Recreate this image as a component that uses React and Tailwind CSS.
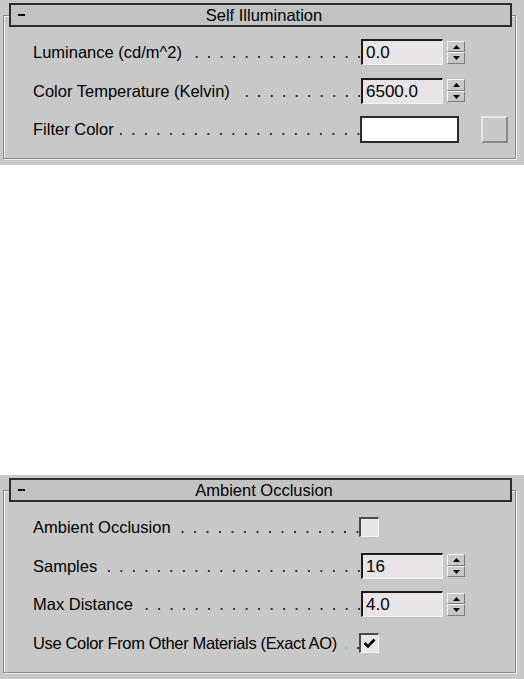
import React from 'react';

// 3ds Max style rollouts: Self Illumination / Ambient Occlusion

const Leader = ({ gap = 6 }) => (
  <span
    className="flex-1 min-w-[6px] h-[2px] mb-[4px] bg-[linear-gradient(to_right,transparent_9.5px,#303030_9.5px,#303030_11.5px,transparent_11.5px)] bg-[length:12.5px_2px] bg-repeat-x bg-right"
    style={{ marginLeft: gap }}
  />
);

const Label = ({ text, width, tight }) => (
  <div className="flex items-end h-[20px] leading-[20px] shrink-0" style={{ width }}>
    <span className={tight ? 'shrink-0 whitespace-nowrap tracking-[-0.35px]' : 'shrink-0 whitespace-nowrap'}>{text}</span>
    <Leader gap={tight ? 9 : 6} />
  </div>
);

const Arrow = ({ up }) => (
  <svg width="7" height="4" viewBox="0 0 7 4">
    <polygon points={up ? '3.5,0 7,4 0,4' : '0,0 7,0 3.5,4'} fill="#000" />
  </svg>
);

const SpinHalf = ({ up }) => (
  <div className="flex-1 flex items-center justify-center bg-[#c8c8c8] border border-t-[#f4f4f4] border-l-[#f4f4f4] border-b-[#7c7c7c] border-r-[#7c7c7c]">
    <Arrow up={up} />
  </div>
);

const Spinner = ({ value }) => (
  <div className="flex items-center">
    <div className="w-[82px] h-[26px] bg-[#e8e4e8] border-t-2 border-l-2 border-b border-r border-t-[#1c1c1c] border-l-[#1c1c1c] border-b-[#f2f2f2] border-r-[#f2f2f2] pl-[3px] text-[17px] leading-[23px]">
      {value}
    </div>
    <div className="ml-[4px] w-[18px] h-[23px] flex flex-col">
      <SpinHalf up />
      <SpinHalf />
    </div>
  </div>
);

const ColorSwatch = () => (
  <div className="flex items-center">
    <div className="w-[99px] h-[27px] bg-white border-2 border-[#2a2a2a]" />
    <div className="ml-[22px] w-[27px] h-[27px] bg-[#c8c8c8] border-2 border-t-[#e4e4e4] border-l-[#e4e4e4] border-b-[#8a8a8a] border-r-[#8a8a8a]" />
  </div>
);

const Checkbox = ({ checked }) => (
  <div className="w-[20px] h-[20px] bg-[#e8e4e8] border-t-2 border-l-2 border-b border-r border-t-[#4a4a4a] border-l-[#4a4a4a] border-b-[#f2f2f2] border-r-[#f2f2f2] flex items-center justify-center">
    {checked && (
      <svg width="13" height="11" viewBox="0 0 13 11">
        <polyline points="1.5,5 5,8.5 11.5,1.5" fill="none" stroke="#000" strokeWidth="2.6" />
      </svg>
    )}
  </div>
);

const Row = ({ label, width = 328, tight, children }) => (
  <div className="flex items-center h-[38.5px] pl-[29px]">
    <Label text={label} width={width} tight={tight} />
    {children}
  </div>
);

const Rollout = ({ title, children }) => (
  <div className="bg-[#c8c8c8] pt-[15px] pb-[6px]">
    <div className="ml-[3px] w-[513px] border border-[#8a8a8a] shadow-[inset_1px_1px_0_#efefef,1px_1px_0_#efefef] pb-[9.5px]">
      <div className="relative -mt-[13px] ml-[5px] w-[503px] h-[24px] bg-[#c2c2c2] border-2 border-[#2d2d2d] flex items-center">
        <span className="ml-[7px] w-[7px] h-[2px] bg-black" />
        <span className="flex-1 mr-[7px] text-center leading-[20px]">{title}</span>
      </div>
      <div className="mt-[6px]">{children}</div>
    </div>
  </div>
);

export default function App() {
  return (
    <div className="w-[524px] h-[679px] bg-white font-['Liberation_Sans',Arial,sans-serif] text-[16.5px] text-black">
      <Rollout title="Self Illumination">
        <Row label="Luminance (cd/m^2)">
          <Spinner value="0.0" />
        </Row>
        <Row label="Color Temperature (Kelvin)">
          <Spinner value="6500.0" />
        </Row>
        <Row label="Filter Color" width={327}>
          <ColorSwatch />
        </Row>
      </Rollout>
      <div className="h-[310px]" />
      <Rollout title="Ambient Occlusion">
        <Row label="Ambient Occlusion" width={326}>
          <Checkbox />
        </Row>
        <Row label="Samples">
          <Spinner value="16" />
        </Row>
        <Row label="Max Distance">
          <Spinner value="4.0" />
        </Row>
        <Row label="Use Color From Other Materials (Exact AO)" width={326} tight>
          <Checkbox checked />
        </Row>
      </Rollout>
    </div>
  );
}
